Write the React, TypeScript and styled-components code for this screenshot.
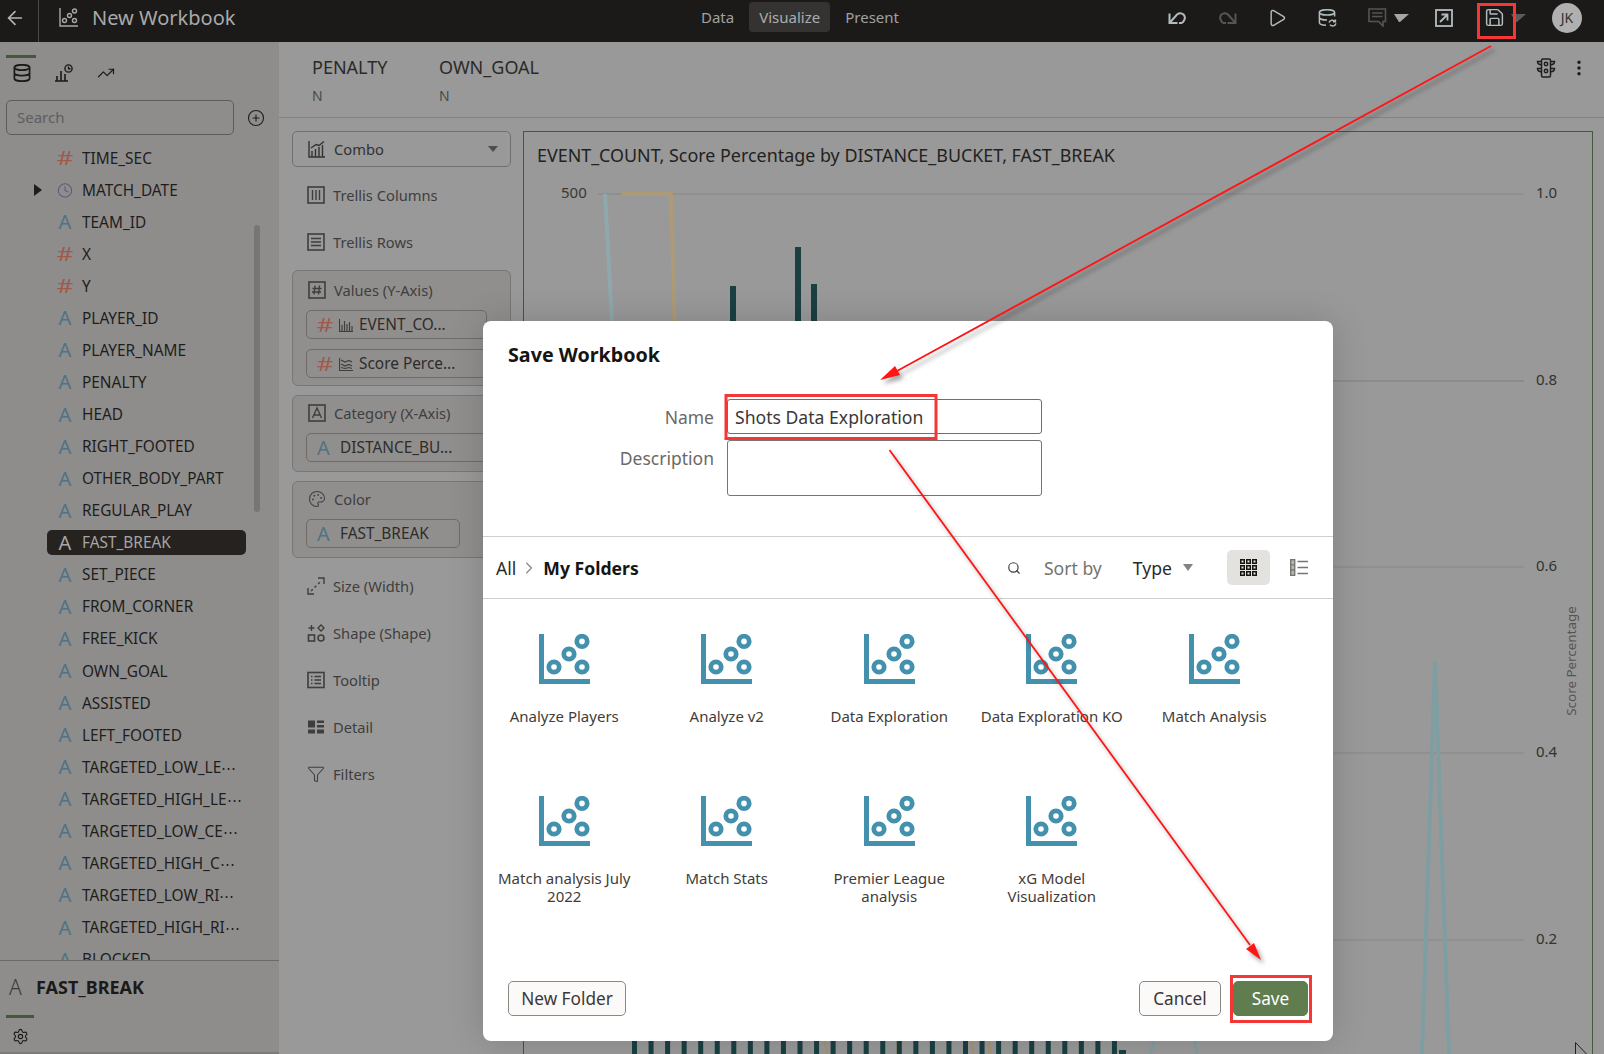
import React from "react";
import styled, { createGlobalStyle } from "styled-components";
import {
  ArrowLeft,
  ChevronRight,
  CirclePlus,
  Clock,
  EllipsisVertical,
  Funnel,
  Palette,
  Play,
  Save,
  Search,
  Settings,
  SquareArrowUpRight,
  TrendingUp,
} from "lucide-react";

const GlobalStyle = createGlobalStyle`
  html, body { margin: 0; padding: 0; height: 100%; overflow: hidden; background: #999; }
  * { box-sizing: border-box; }
  body, input, textarea, button { font-family: "Noto Sans", "Open Sans", sans-serif; }
`;

// Page shell, every colour below the dialog is already the dimmed one
const Page = styled.div`
  position: relative;
  display: flex;
  flex-direction: column;
  width: 1604px;
  height: 1054px;
  overflow: hidden;
  background: #999;
`;

const TopBar = styled.header`
  display: flex;
  align-items: flex-start;
  flex: none;
  height: 42px;
  background: #1b1a19;
  color: #a6a6a6;
`;

const BackCell = styled.div`
  display: flex;
  align-items: center;
  flex: none;
  width: 39px;
  height: 42px;
  padding: 0 0 6px 4px;
  border-right: 1px solid #4a4846;
  color: #b4b4b4;
`;

const BrandZone = styled.div`
  display: flex;
  align-items: center;
  gap: 14px;
  width: 652px;
  height: 35px;
  padding-left: 20px;
`;

const WorkbookName = styled.span`
  font-size: 20px;
  color: #a9a9a9;
`;

const Tabs = styled.nav`
  display: flex;
  align-items: center;
  gap: 5px;
  height: 34px;
`;

const Tab = styled.div<{ $active?: boolean }>`
  display: flex;
  align-items: center;
  height: 30px;
  padding: 0 10px;
  border-radius: 4px;
  font-size: 15px;
  background: ${({ $active }) => ($active ? "#343331" : "transparent")};
  color: ${({ $active }) => ($active ? "#adadad" : "#a0a0a0")};
`;

const Actions = styled.div`
  display: flex;
  align-items: center;
  gap: 20px;
  height: 35px;
  margin-left: auto;
  padding-right: 22px;
`;

const ActionIcon = styled.div<{ $dim?: boolean }>`
  display: flex;
  align-items: center;
  justify-content: center;
  width: 30px;
  height: 30px;
  color: ${({ $dim }) => ($dim ? "#565554" : "#b2bcbe")};
`;

const Caret = styled.span<{ $dim?: boolean }>`
  width: 15px;
  height: 0;
  margin-left: -18px;
  border-top: 8px solid ${({ $dim }) => ($dim ? "#5c5b5a" : "#a5a5a5")};
  border-left: 5.5px solid transparent;
  border-right: 9.5px solid transparent;
`;

const Avatar = styled.div`
  display: flex;
  align-items: center;
  justify-content: center;
  width: 30px;
  height: 30px;
  margin-left: 6px;
  border-radius: 50%;
  background: #b0b0b0;
  color: #333;
  font-size: 14px;
`;

const Body = styled.div`
  display: flex;
  flex: 1;
  min-height: 0;
`;

// Left data panel
const Sidebar = styled.aside`
  position: relative;
  display: flex;
  flex-direction: column;
  flex: none;
  width: 279px;
  padding-top: 13px;
  background: #8e8d8c;
`;

const Indicator = styled.div<{ $width: number }>`
  flex: none;
  width: ${({ $width }) => $width}px;
  height: 3px;
  margin-left: 6px;
  background: #46583a;
`;

const PanelTabs = styled.div`
  display: flex;
  align-items: center;
  gap: 24px;
  height: 20px;
  margin-top: 5px;
  padding-left: 13px;
  color: #1b1a19;
`;

const SearchRow = styled.div`
  display: flex;
  align-items: center;
  margin-top: 17px;
  padding-left: 6px;
  color: #1f1e1d;
`;

const SearchInput = styled.input`
  width: 228px;
  height: 35px;
  margin-right: 13px;
  padding: 0 10px 2px;
  border: 1px solid #5d5c5b;
  border-radius: 5px;
  background: transparent;
  font-size: 15px;
  outline: none;
  &::placeholder { color: #5f5e5c; opacity: 1; }
`;

const ColumnList = styled.div`
  flex: 1;
  min-height: 0;
  overflow: hidden;
  padding-top: 7px;
`;

const ColumnRow = styled.div`
  display: flex;
  align-items: center;
  height: 32.07px;
  margin: 0 33px 0 47px;
`;

const ColumnInner = styled.div<{ $selected?: boolean }>`
  display: flex;
  align-items: center;
  flex: 1;
  height: 25px;
  padding-left: 10px;
  border-radius: 5px;
  white-space: nowrap;
  font-size: 15.4px;
  background: ${({ $selected }) => ($selected ? "#262220" : "transparent")};
  color: ${({ $selected }) => ($selected ? "#a8a6a4" : "#1f1d1c")};
`;

const TypeGlyph = styled.span<{ $kind: "A" | "#"; $selected?: boolean }>`
  flex: none;
  width: 16px;
  margin-right: 9px;
  text-align: center;
  font-size: 20px;
  line-height: 20px;
  transform: ${({ $kind }) => ($kind === "#" ? "scaleX(1.3)" : "none")};
  color: ${({ $kind, $selected }) => ($selected ? "#a8a6a4" : $kind === "A" ? "#4f7385" : "#a0594b")};
`;

const ExpandCaret = styled.span`
  flex: none;
  width: 0;
  height: 0;
  margin: 0 15px 0 -23px;
  border-left: 8px solid #1f1d1c;
  border-top: 6.5px solid transparent;
  border-bottom: 6.5px solid transparent;
`;

const ClockSlot = styled.span`
  display: flex;
  flex: none;
  width: 16px;
  margin-right: 9px;
  color: #65567f;
`;

const ScrollThumb = styled.div`
  position: absolute;
  left: 254px;
  top: 183px;
  width: 6px;
  height: 287px;
  border-radius: 3px;
  background: #777675;
`;

const SidebarFooter = styled.div`
  flex: none;
  height: 94px;
  border-top: 1px solid #6b6a69;
  border-bottom: 2px solid #7c7b7a;
`;

const Selection = styled.div`
  display: flex;
  align-items: center;
  height: 52px;
  margin-bottom: 2px;
  padding-left: 9px;
  color: #1b1a19;
`;

const SelectionGlyph = styled.span`
  width: 27px;
  font-size: 21px;
  font-weight: 300;
  color: #3d3b39;
`;

const SelectionName = styled.span`
  font-size: 18px;
  font-weight: 700;
`;

const GearRow = styled.div`
  display: flex;
  padding: 10px 0 0 12px;
  color: #1b1a19;
`;

// Canvas on the right of the data panel
const Main = styled.main`
  display: flex;
  flex-direction: column;
  flex: 1;
  min-width: 0;
`;

const CanvasHeader = styled.div`
  display: flex;
  flex: none;
  height: 76px;
  padding: 13px 15px 0 33px;
  border-bottom: 1px solid #838382;
`;

const FilterColumn = styled.div`
  width: 127px;
`;

const FilterName = styled.div`
  font-size: 18px;
  line-height: 24px;
  color: #2b2a28;
`;

const FilterValue = styled.div`
  margin-top: 7px;
  font-size: 14px;
  line-height: 20px;
  color: #4a4947;
`;

const CanvasTools = styled.div`
  display: flex;
  align-items: center;
  gap: 13px;
  height: 26px;
  margin-left: auto;
  color: #1f1e1d;
`;

const Workspace = styled.div`
  display: flex;
  flex: 1;
  min-height: 0;
  padding-top: 13px;
`;

const Grammar = styled.div`
  flex: none;
  width: 244px;
  padding-left: 13px;
  font-size: 14.7px;
  color: #3f3e3c;
`;

const ChartTypeSelect = styled.div`
  display: flex;
  align-items: center;
  width: 219px;
  height: 36px;
  padding: 0 12px 0 15px;
  border: 1px solid #706f6e;
  border-radius: 5px;
  color: #333230;
`;

const SelectLabel = styled.span`
  margin-left: 8px;
`;

const SelectCaret = styled.span`
  width: 0;
  height: 0;
  margin-left: auto;
  border-top: 6px solid #4f4e4c;
  border-left: 5px solid transparent;
  border-right: 5px solid transparent;
`;

const GrammarRow = styled.div`
  display: flex;
  align-items: center;
  gap: 8px;
  height: 47px;
  padding-left: 15px;
  &:nth-child(2) { margin-top: 4px; }
`;

const Slot = styled.div<{ $first?: boolean; $last?: boolean }>`
  width: 219px;
  margin-top: ${({ $first }) => ($first ? 5 : 9)}px;
  margin-bottom: ${({ $last }) => ($last ? 4 : 0)}px;
  padding: ${({ $first }) => ($first ? "8px 13px 7px" : "6px 13px 9px")};
  border: 1px solid #797776;
  border-radius: 6px;
  background: #918f8e;
`;

const SlotHeader = styled.div`
  display: flex;
  align-items: center;
  gap: 8px;
  height: 22px;
  margin-bottom: 9px;
  padding-left: 2px;
`;

const Pill = styled.div<{ $width: number }>`
  display: flex;
  align-items: center;
  width: ${({ $width }) => $width}px;
  height: 29px;
  padding-left: 10px;
  border: 1px solid #6d6c6b;
  border-radius: 5px;
  white-space: nowrap;
  font-size: 15.4px;
  color: #2d2c2a;
  & + & { margin-top: 10px; }
`;

const PillHash = styled.span`
  width: 16px;
  margin-right: 6px;
  text-align: center;
  font-size: 20px;
  line-height: 20px;
  transform: scaleX(1.3);
  color: #a0594b;
`;

const PillA = styled.span`
  width: 16px;
  margin-right: 7px;
  font-size: 20px;
  line-height: 20px;
  color: #4f7385;
`;

const PillIcon = styled.span`
  display: flex;
  width: 14px;
  margin-right: 6px;
  color: #3f3e3c;
`;

const ChartPanel = styled.section`
  flex: 1;
  min-width: 0;
  margin-right: 11px;
  border: 1px solid #46583a;
  border-bottom: 0;
`;

const ChartTitle = styled.div`
  padding: 11px 0 1px 13px;
  font-size: 17.9px;
  line-height: 24px;
  white-space: nowrap;
  color: #232220;
`;

const ChartCanvas = styled.svg`
  display: block;
`;

// Save dialog
const Dialog = styled.div`
  position: absolute;
  left: 483px;
  top: 321px;
  display: flex;
  flex-direction: column;
  width: 850px;
  height: 720px;
  border-radius: 8px;
  background: #fff;
  box-shadow: 0 0 36px rgba(0, 0, 0, 0.16);
`;

const DialogTitle = styled.h2`
  margin: 0;
  padding: 20px 25px 0;
  font-size: 19.7px;
  font-weight: 700;
  line-height: 28px;
  color: #161513;
`;

const Form = styled.div`
  display: grid;
  grid-template-columns: 231px 315px;
  grid-template-rows: 35px 56px;
  column-gap: 13px;
  row-gap: 6px;
  margin: 30px 0 40px;
`;

const FieldLabel = styled.label`
  padding-top: 5px;
  text-align: right;
  font-size: 17.5px;
  line-height: 26px;
  color: #6b6965;
`;

const NameInput = styled.input`
  width: 100%;
  padding: 0 7px;
  border: 1px solid #5f7d4f;
  border-radius: 3px;
  font-size: 17.6px;
  color: #3a3836;
  outline: none;
`;

const DescriptionInput = styled.textarea`
  width: 100%;
  border: 1px solid #77756f;
  border-radius: 3px;
  resize: none;
  outline: none;
`;

const Browser = styled.div`
  display: flex;
  align-items: center;
  flex: none;
  height: 63px;
  padding: 0 25px 0 13px;
  border-top: 1px solid #d2cfca;
  border-bottom: 1px solid #d2cfca;
  font-size: 17.6px;
`;

const Crumb = styled.span<{ $current?: boolean }>`
  font-weight: ${({ $current }) => ($current ? 700 : 400)};
  color: ${({ $current }) => ($current ? "#161513" : "#2c2a28")};
`;

const CrumbArrow = styled.span`
  display: flex;
  margin: 0 4px 0 3px;
  color: #8a8782;
`;

const SearchButton = styled.span`
  display: flex;
  margin-left: auto;
  margin-right: 23px;
  color: #3f3d3a;
`;

const SortLabel = styled.span`
  margin-right: 31px;
  color: #76736e;
`;

const SortValue = styled.span`
  margin-right: 11px;
  color: #2c2a28;
`;

const SortCaret = styled.span`
  width: 0;
  height: 0;
  margin-right: 34px;
  border-top: 7px solid #85827d;
  border-left: 5.5px solid transparent;
  border-right: 5.5px solid transparent;
`;

const ViewToggle = styled.span<{ $active?: boolean }>`
  display: flex;
  align-items: center;
  justify-content: center;
  width: ${({ $active }) => ($active ? 43 : 18)}px;
  height: 35px;
  margin-right: ${({ $active }) => ($active ? 20 : 0)}px;
  border-radius: 5px;
  background: ${({ $active }) => ($active ? "#e4e2de" : "transparent")};
`;

const FileGrid = styled.div`
  display: grid;
  grid-template-columns: repeat(5, 162.5px);
  grid-auto-rows: 162px;
  padding-top: 35px;
`;

const FileItem = styled.div`
  display: flex;
  flex-direction: column;
  align-items: center;
`;

const FileLabel = styled.div`
  width: 146px;
  margin-top: 23px;
  text-align: center;
  font-size: 15px;
  line-height: 18px;
  color: #3f3d3a;
`;

const DialogFooter = styled.div`
  display: flex;
  align-items: center;
  gap: 12px;
  margin-top: auto;
  padding: 0 25px 25px;
`;

const Button = styled.button<{ $primary?: boolean; $width: number }>`
  width: ${({ $width }) => $width}px;
  height: 35px;
  padding: 0;
  border: 1px solid ${({ $primary }) => ($primary ? "#5f7d4f" : "#8b8882")};
  border-radius: 5px;
  font-size: 17.2px;
  background: ${({ $primary }) => ($primary ? "#5f7d4f" : "#fbfaf8")};
  color: ${({ $primary }) => ($primary ? "#fff" : "#3a3836")};
  &:first-child { margin-right: auto; }
`;

const Annotations = styled.svg`
  position: absolute;
  left: 0;
  top: 0;
  pointer-events: none;
`;

const ArrowGroup = styled.g`
  filter: drop-shadow(3px 4px 2px rgba(0, 0, 0, 0.35));
`;

type Column = { name: string; kind: "A" | "#" | "date"; selected?: boolean };

const columns: Column[] = [
  { name: "TIME_SEC", kind: "#" },
  { name: "MATCH_DATE", kind: "date" },
  { name: "TEAM_ID", kind: "A" },
  { name: "X", kind: "#" },
  { name: "Y", kind: "#" },
  { name: "PLAYER_ID", kind: "A" },
  { name: "PLAYER_NAME", kind: "A" },
  { name: "PENALTY", kind: "A" },
  { name: "HEAD", kind: "A" },
  { name: "RIGHT_FOOTED", kind: "A" },
  { name: "OTHER_BODY_PART", kind: "A" },
  { name: "REGULAR_PLAY", kind: "A" },
  { name: "FAST_BREAK", kind: "A", selected: true },
  { name: "SET_PIECE", kind: "A" },
  { name: "FROM_CORNER", kind: "A" },
  { name: "FREE_KICK", kind: "A" },
  { name: "OWN_GOAL", kind: "A" },
  { name: "ASSISTED", kind: "A" },
  { name: "LEFT_FOOTED", kind: "A" },
  { name: "TARGETED_LOW_LE⋯", kind: "A" },
  { name: "TARGETED_HIGH_LE⋯", kind: "A" },
  { name: "TARGETED_LOW_CE⋯", kind: "A" },
  { name: "TARGETED_HIGH_C⋯", kind: "A" },
  { name: "TARGETED_LOW_RI⋯", kind: "A" },
  { name: "TARGETED_HIGH_RI⋯", kind: "A" },
  { name: "BLOCKED", kind: "A" },
];

const workbooks = [
  "Analyze Players",
  "Analyze v2",
  "Data Exploration",
  "Data Exploration KO",
  "Match Analysis",
  "Match analysis July 2022",
  "Match Stats",
  "Premier League analysis",
  "xG Model Visualization",
];

const Line = ({ size = 18, children }: { size?: number; children: React.ReactNode }) => (
  <svg width={size} height={size} viewBox="0 0 18 18" fill="none" stroke="currentColor" strokeWidth="1.4">
    {children}
  </svg>
);

const WorkbookIcon = () => (
  <svg width="51" height="50" viewBox="0 0 51 50">
    <path d="M0 0h5v45h46v5H0z" fill="#4391ad" />
    <g fill="none" stroke="#4391ad" strokeWidth="4.8">
      <circle cx="15" cy="33" r="5.2" />
      <circle cx="30" cy="20" r="5.2" />
      <circle cx="43" cy="7.4" r="5.2" />
      <circle cx="43" cy="33" r="5.2" />
    </g>
  </svg>
);

const SmallWorkbookIcon = () => (
  <svg width="19" height="19" viewBox="0 0 19 19" fill="none" stroke="#a8a8a8" strokeWidth="1.4">
    <path d="M1 0v18h18" />
    <circle cx="5.5" cy="12.5" r="2" />
    <circle cx="10.5" cy="7.5" r="2" />
    <circle cx="15.5" cy="3" r="2" />
    <circle cx="15.5" cy="12.5" r="2" />
  </svg>
);

const UndoIcon = ({ flip }: { flip?: boolean }) => (
  <svg width="19" height="14" viewBox="0 0 19 14" fill="none" stroke="currentColor" strokeWidth="2">
    <g transform={flip ? "translate(19,0) scale(-1,1)" : undefined}>
      <path d="M1.5 2.5v9.5h8" />
      <path d="M1.5 12l7.5-8.5q3.5-2.5 6.5 0 3 3.5-.5 7.5l-1.5 1H11" />
    </g>
  </svg>
);

const DataReloadIcon = () => (
  <svg width="19" height="18" viewBox="0 0 19 18" fill="none" stroke="currentColor" strokeWidth="1.5">
    <ellipse cx="9" cy="3.4" rx="7.6" ry="2.7" />
    <path d="M1.4 3.4v10.2c0 1.5 3 2.7 6.6 2.7M16.6 3.4v4M1.4 8.4c0 1.5 3.4 2.7 7.6 2.7" />
    <path d="M11 13.6a3.4 3.4 0 0 1 6-1M18 14.4a3.4 3.4 0 0 1-6 1.2M17.4 10.4v2.4H15" />
  </svg>
);

const CommentIcon = () => (
  <svg width="19" height="19" viewBox="0 0 19 19" fill="none" stroke="currentColor" strokeWidth="1.6">
    <path d="M1 1h16.5v12.5h-2.5V18l-4.5-4.5H1z" />
    <path d="M4 5h10.5M4 8.5h10.5" />
  </svg>
);

const ExportIcon = () => (
  <svg width="18" height="18" viewBox="0 0 18 18" fill="none" stroke="currentColor" strokeWidth="1.8">
    <rect x="1" y="1" width="16" height="16" />
    <path d="M5 13l7-7M6.5 5.5H12.5V11.5" />
  </svg>
);

const TrafficIcon = () => (
  <svg width="20" height="20" viewBox="0 0 20 20" fill="none" stroke="currentColor" strokeWidth="1.5">
    <rect x="5.5" y="1" width="9" height="18" rx="1.5" />
    <circle cx="10" cy="6" r="1.7" />
    <circle cx="10" cy="13" r="1.7" />
    <path d="M5.5 3.5H1.5c0 2 1.6 3.2 4 3.2M5.5 10.5H1.5c0 2 1.6 3.2 4 3.2M14.5 3.5h4c0 2-1.6 3.2-4 3.2M14.5 10.5h4c0 2-1.6 3.2-4 3.2" />
  </svg>
);

const DatabaseIcon = () => (
  <svg width="18" height="18" viewBox="0 0 18 18" fill="none" stroke="currentColor" strokeWidth="1.7">
    <ellipse cx="9" cy="3.5" rx="7.6" ry="2.7" />
    <path d="M1.4 3.5v11c0 1.5 3.4 2.7 7.6 2.7s7.6-1.2 7.6-2.7v-11M1.4 9c0 1.5 3.4 2.7 7.6 2.7s7.6-1.2 7.6-2.7" />
  </svg>
);

const AnalyticsIcon = () => (
  <svg width="18" height="18" viewBox="0 0 18 18" fill="none" stroke="currentColor" strokeWidth="1.4">
    <path d="M0 17h13M2 17v-5M6 17V7M10 17v-7" strokeWidth="1.6" />
    <circle cx="13.5" cy="4.5" r="3.6" />
    <path d="M13.5 2.5v2.2h2" />
  </svg>
);

const ComboIcon = () => (
  <Line>
    <path d="M1 1v16h16M4 17v-6M7.5 17V9M11 17V7M14.5 17V5M3 8l5-3.5 3 1 5-4" />
  </Line>
);

const TrellisColumnsIcon = () => (
  <Line>
    <rect x="1" y="1" width="16" height="16" strokeWidth="1.6" />
    <path d="M5.5 4v10M9 4v10M12.5 4v10" />
  </Line>
);

const TrellisRowsIcon = () => (
  <Line>
    <rect x="1" y="1" width="16" height="16" strokeWidth="1.6" />
    <path d="M4 5.5h10M4 9h10M4 12.5h10" />
  </Line>
);

const HashBoxIcon = () => (
  <Line>
    <rect x="1" y="1" width="16" height="16" strokeWidth="1.6" />
    <path d="M7 4.5l-1 9M11.5 4.5l-1 9M4.5 7.5h9M4 11h9" />
  </Line>
);

const LetterBoxIcon = () => (
  <Line>
    <rect x="1" y="1" width="16" height="16" strokeWidth="1.6" />
    <path d="M4.5 14L9 4l4.5 10M6 11h6" />
  </Line>
);

const SizeIcon = () => (
  <Line>
    <path d="M1 11v6h6M17 7V1h-6" />
    <path d="M4 14l10-10" strokeDasharray="2.5 2.5" />
  </Line>
);

const ShapeIcon = () => (
  <Line>
    <path d="M4.5 1v6M1.5 4h6" />
    <rect x="1.5" y="11" width="6" height="6" strokeWidth="1.6" />
    <path d="M14 1l3 3-3 3-3-3z" />
    <circle cx="14" cy="14" r="3" strokeWidth="1.6" />
  </Line>
);

const TooltipIcon = () => (
  <Line>
    <rect x="1" y="1.5" width="16" height="15" strokeWidth="1.6" />
    <path d="M4 5.5h1.5M7.5 5.5H14M4 9h1.5M7.5 9H14M4 12.5h1.5M7.5 12.5H14" />
  </Line>
);

const DetailIcon = () => (
  <svg width="18" height="18" viewBox="0 0 18 18" fill="currentColor">
    <rect x="1" y="2.5" width="7" height="7" />
    <rect x="10" y="2.5" width="7" height="2.5" />
    <rect x="10" y="7" width="7" height="2.5" />
    <rect x="1" y="11.5" width="7" height="4" />
    <rect x="10" y="11.5" width="7" height="4" />
  </svg>
);

const BarsMini = () => (
  <svg width="14" height="14" viewBox="0 0 14 14" fill="none" stroke="currentColor" strokeWidth="1.2">
    <path d="M.5 1v12.5H14M3 13V7M5.5 13V3M8 13V6M10.5 13V4M13 13V8" />
  </svg>
);

const AreaMini = () => (
  <svg width="14" height="14" viewBox="0 0 14 14" fill="none" stroke="currentColor" strokeWidth="1.2">
    <path d="M.5 1v12.5H14M2 3l4 2 4-1.5 3 1.5M2 7l4 2 4-1.5 3 1.5M2 10.5l4 1 4-1 3 1" />
  </svg>
);

const GridViewIcon = () => (
  <svg width="17" height="17" viewBox="0 0 17 17" fill="none" stroke="#161513" strokeWidth="1.5">
    {[0, 6, 12].map((y) =>
      [0, 6, 12].map((x) => <rect key={`${x}-${y}`} x={x + 0.75} y={y + 0.75} width="3.5" height="3.5" />)
    )}
  </svg>
);

const ListViewIcon = () => (
  <svg width="18" height="17" viewBox="0 0 18 17" fill="none" stroke="#77756f" strokeWidth="1.4">
    <rect x="0.7" y="0.7" width="4" height="15.6" fill="#b9b7b3" />
    <path d="M.7 5.9h4M.7 11h4M7.5 2.5H18M7.5 8.5H18M7.5 14.5H18" />
  </svg>
);

const bottomBars = Array.from({ length: 30 }, (_, i) => 632 + i * 16.55);
const gridLines = [
  { y: 194, label: "1.0" },
  { y: 381, label: "0.8" },
  { y: 567, label: "0.6" },
  { y: 753, label: "0.4" },
  { y: 940, label: "0.2" },
];

const Chart = () => (
  <ChartCanvas width="1068" height="886" viewBox="524 168 1068 886">
    {gridLines.map((g) => (
      <React.Fragment key={g.label}>
        <line x1="598" x2="1524" y1={g.y} y2={g.y} stroke="#868788" strokeWidth={g.y === 381 ? 1.5 : 1} />
        <text x="1536" y={g.y + 4} fontSize="15" fill="#333230" fontFamily="Noto Sans">
          {g.label}
        </text>
      </React.Fragment>
    ))}
    <text x="561" y="198" fontSize="15" fill="#3a3836" fontFamily="Noto Sans">
      500
    </text>
    <text
      transform="translate(1576 661) rotate(-90)"
      textAnchor="middle"
      fontSize="13.4"
      fill="#555452"
      fontFamily="Noto Sans"
    >
      Score Percentage
    </text>
    <g fill="none" strokeWidth="4">
      <path d="M605 194L613 340" stroke="#8fa8ac" />
      <path d="M622 194H671L675 340" stroke="#ae9a76" />
      <path d="M1422 1054L1435 661L1449 1054" stroke="#7f9ea2" />
      <path d="M1150 1054L1158 1030M1193 1030L1197 1054" stroke="#7f9ea2" strokeWidth="3" />
      <path d="M827 1054L822 1030M897 1054L899 1030M973 1054L970 1030M990 1054L988 1030" stroke="#a8946f" strokeWidth="2.5" />
    </g>
    <g fill="#1a4042">
      <rect x="730" y="286" width="6" height="120" />
      <rect x="795" y="247" width="6" height="120" />
      <rect x="811" y="284" width="6" height="120" />
      {bottomBars.map((x) => (
        <rect key={x} x={x} y="1030" width="5" height="24" />
      ))}
      <rect x="1119" y="1050" width="7" height="4" />
    </g>
  </ChartCanvas>
);

export default function App() {
  return (
    <>
      <GlobalStyle />
      <Page>
        <TopBar>
          <BackCell>
            <ArrowLeft size={22} strokeWidth={1.8} />
          </BackCell>
          <BrandZone>
            <SmallWorkbookIcon />
            <WorkbookName>New Workbook</WorkbookName>
          </BrandZone>
          <Tabs>
            <Tab>Data</Tab>
            <Tab $active>Visualize</Tab>
            <Tab>Present</Tab>
          </Tabs>
          <Actions>
            <ActionIcon>
              <UndoIcon />
            </ActionIcon>
            <ActionIcon $dim>
              <UndoIcon flip />
            </ActionIcon>
            <ActionIcon>
              <Play size={20} strokeWidth={1.7} />
            </ActionIcon>
            <ActionIcon>
              <DataReloadIcon />
            </ActionIcon>
            <ActionIcon $dim>
              <CommentIcon />
            </ActionIcon>
            <Caret />
            <ActionIcon>
              <ExportIcon />
            </ActionIcon>
            <ActionIcon>
              <Save size={21} strokeWidth={1.7} />
            </ActionIcon>
            <Caret $dim />
            <Avatar>JK</Avatar>
          </Actions>
        </TopBar>
        <Body>
          <Sidebar>
            <Indicator $width={30} />
            <PanelTabs>
              <DatabaseIcon />
              <AnalyticsIcon />
              <TrendingUp size={18} strokeWidth={1.6} />
            </PanelTabs>
            <SearchRow>
              <SearchInput placeholder="Search" />
              <CirclePlus size={18} strokeWidth={1.5} />
            </SearchRow>
            <ColumnList>
              {columns.map((column) => (
                <ColumnRow key={column.name}>
                  <ColumnInner $selected={column.selected}>
                    {column.kind === "date" ? (
                      <>
                        <ExpandCaret />
                        <ClockSlot>
                          <Clock size={17} strokeWidth={1.6} />
                        </ClockSlot>
                      </>
                    ) : (
                      <TypeGlyph $kind={column.kind} $selected={column.selected}>
                        {column.kind}
                      </TypeGlyph>
                    )}
                    {column.name}
                  </ColumnInner>
                </ColumnRow>
              ))}
            </ColumnList>
            <ScrollThumb />
            <SidebarFooter>
              <Selection>
                <SelectionGlyph>A</SelectionGlyph>
                <SelectionName>FAST_BREAK</SelectionName>
              </Selection>
              <Indicator $width={28} />
              <GearRow>
                <Settings size={17} strokeWidth={1.6} />
              </GearRow>
            </SidebarFooter>
          </Sidebar>
          <Main>
            <CanvasHeader>
              <FilterColumn>
                <FilterName>PENALTY</FilterName>
                <FilterValue>N</FilterValue>
              </FilterColumn>
              <FilterColumn>
                <FilterName>OWN_GOAL</FilterName>
                <FilterValue>N</FilterValue>
              </FilterColumn>
              <CanvasTools>
                <TrafficIcon />
                <EllipsisVertical size={20} strokeWidth={2.2} />
              </CanvasTools>
            </CanvasHeader>
            <Workspace>
              <Grammar>
                <ChartTypeSelect>
                  <ComboIcon />
                  <SelectLabel>Combo</SelectLabel>
                  <SelectCaret />
                </ChartTypeSelect>
                <GrammarRow>
                  <TrellisColumnsIcon />
                  Trellis Columns
                </GrammarRow>
                <GrammarRow>
                  <TrellisRowsIcon />
                  Trellis Rows
                </GrammarRow>
                <Slot $first>
                  <SlotHeader>
                    <HashBoxIcon />
                    Values (Y-Axis)
                  </SlotHeader>
                  <Pill $width={181}>
                    <PillHash>#</PillHash>
                    <PillIcon>
                      <BarsMini />
                    </PillIcon>
                    EVENT_CO...
                  </Pill>
                  <Pill $width={181}>
                    <PillHash>#</PillHash>
                    <PillIcon>
                      <AreaMini />
                    </PillIcon>
                    Score Perce...
                  </Pill>
                </Slot>
                <Slot>
                  <SlotHeader>
                    <LetterBoxIcon />
                    Category (X-Axis)
                  </SlotHeader>
                  <Pill $width={181}>
                    <PillA>A</PillA>
                    DISTANCE_BU...
                  </Pill>
                </Slot>
                <Slot $last>
                  <SlotHeader>
                    <Palette size={18} strokeWidth={1.4} />
                    Color
                  </SlotHeader>
                  <Pill $width={154}>
                    <PillA>A</PillA>
                    FAST_BREAK
                  </Pill>
                </Slot>
                <GrammarRow>
                  <SizeIcon />
                  Size (Width)
                </GrammarRow>
                <GrammarRow>
                  <ShapeIcon />
                  Shape (Shape)
                </GrammarRow>
                <GrammarRow>
                  <TooltipIcon />
                  Tooltip
                </GrammarRow>
                <GrammarRow>
                  <DetailIcon />
                  Detail
                </GrammarRow>
                <GrammarRow>
                  <Funnel size={18} strokeWidth={1.4} />
                  Filters
                </GrammarRow>
              </Grammar>
              <ChartPanel>
                <ChartTitle>EVENT_COUNT, Score Percentage by DISTANCE_BUCKET, FAST_BREAK</ChartTitle>
                <Chart />
              </ChartPanel>
            </Workspace>
          </Main>
        </Body>

        <Dialog>
          <DialogTitle>Save Workbook</DialogTitle>
          <Form>
            <FieldLabel>Name</FieldLabel>
            <NameInput defaultValue="Shots Data Exploration" />
            <FieldLabel>Description</FieldLabel>
            <DescriptionInput />
          </Form>
          <Browser>
            <Crumb>All</Crumb>
            <CrumbArrow>
              <ChevronRight size={20} strokeWidth={1.4} />
            </CrumbArrow>
            <Crumb $current>My Folders</Crumb>
            <SearchButton>
              <Search size={14} strokeWidth={2} />
            </SearchButton>
            <SortLabel>Sort by</SortLabel>
            <SortValue>Type</SortValue>
            <SortCaret />
            <ViewToggle $active>
              <GridViewIcon />
            </ViewToggle>
            <ViewToggle>
              <ListViewIcon />
            </ViewToggle>
          </Browser>
          <FileGrid>
            {workbooks.map((name) => (
              <FileItem key={name}>
                <WorkbookIcon />
                <FileLabel>{name}</FileLabel>
              </FileItem>
            ))}
          </FileGrid>
          <DialogFooter>
            <Button $width={118}>New Folder</Button>
            <Button $width={82}>Cancel</Button>
            <Button $primary $width={75}>
              Save
            </Button>
          </DialogFooter>
        </Dialog>

        <Annotations width="1604" height="1054" viewBox="0 0 1604 1054">
          <g fill="none" stroke="#f53636" strokeWidth="3">
            <rect x="1478.5" y="4.5" width="36" height="33" />
            <rect x="726" y="395.5" width="210" height="43" />
            <rect x="1231.5" y="976.5" width="79" height="45" />
          </g>
          <ArrowGroup>
            <line x1="1491" y1="46" x2="897" y2="371" stroke="#ff1515" strokeWidth="1.8" />
            <polygon points="880,380 900,375 895,366" fill="#ff1515" />
            <line x1="889.5" y1="450" x2="1250" y2="945" stroke="#ff1515" strokeWidth="1.8" />
            <polygon points="1261,960 1254,943 1246,949" fill="#ff1515" />
          </ArrowGroup>
          <path d="M1575.5 1042.5v12M1575.5 1042.5l11 11.5" fill="#d8d8d8" stroke="#222" strokeWidth="1" />
        </Annotations>
      </Page>
    </>
  );
}
